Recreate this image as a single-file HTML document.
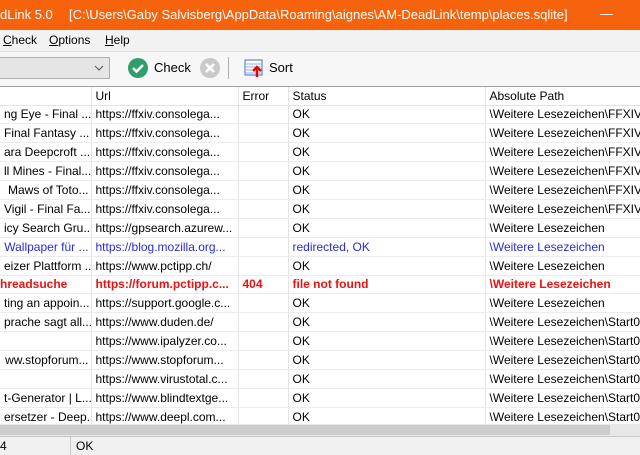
<!DOCTYPE html>
<html><head><meta charset="utf-8"><style>
*{margin:0;padding:0;box-sizing:border-box}
body{width:640px;height:455px;overflow:hidden;background:#f0f0f0;font-family:"Liberation Sans",sans-serif;font-size:12px;color:#000;position:relative}
.title{position:absolute;left:0;top:0;width:640px;height:30px;background:#f7630c;color:#fff;font-size:13px;line-height:30px;white-space:nowrap}
.menu{position:absolute;top:30px;left:0;width:640px;height:22px;background:#f2f2f2;line-height:21px;font-size:12px;border-bottom:1px solid #e0e0e0}
.tool{position:absolute;top:52px;left:0;width:640px;height:34px;background:#f7f7f7}
.grid{position:absolute;top:86px;left:0;width:640px;height:338px;background:#fff;border-top:1px solid #a0a0a0;overflow:hidden}
table{border-collapse:collapse;table-layout:fixed;width:660px}
td{height:18.9px;border-right:1px solid #e3e3e3;border-bottom:1px solid #ececec;white-space:nowrap;overflow:hidden;padding:0 4px;font-size:12px}
tr.h td{height:18px;border-right:1px solid #e3e3e3;border-bottom:1px solid #e3e3e3;font-size:12px}
tr.b td{color:#2a2ad6}
tr.r td{color:#ee1111;font-weight:bold}
.n{text-align:right;padding-right:2px}
.scroll{position:absolute;top:424px;left:0;width:640px;height:12px;background:#e8e8e8}
.status{position:absolute;top:436px;left:0;width:640px;height:19px;background:#f0f0f0;border-top:1px solid #c8c8c8;line-height:18px}
</style></head><body>
<div class="title"><span style="position:absolute;left:0">dLink 5.0</span><span style="position:absolute;left:69px">[C:\Users\Gaby Salvisberg\AppData\Roaming\aignes\AM-DeadLink\temp\places.sqlite]</span><span style="position:absolute;left:600px;top:-1px">—</span></div>
<div class="menu"><span style="position:absolute;left:3px"><u>C</u>heck</span><span style="position:absolute;left:49px"><u>O</u>ptions</span><span style="position:absolute;left:105px"><u>H</u>elp</span></div>
<div class="tool">
<div style="position:absolute;left:-2px;top:5px;width:112px;height:22px;background:#e5e5e5;border:1px solid #adadad"><svg style="position:absolute;left:95px;top:7px" width="10" height="6"><path d="M1 1L5 5L9 1" stroke="#555" fill="none"/></svg></div>
<svg style="position:absolute;left:128px;top:6px" width="20" height="20"><circle cx="10" cy="10" r="10" fill="#2e9e6b"/><path d="M5 10l3.5 3.5L15 7" stroke="#fff" stroke-width="2.6" fill="none"/></svg>
<span style="position:absolute;left:154px;top:8px;font-size:13px">Check</span>
<svg style="position:absolute;left:200px;top:6px" width="20" height="20"><circle cx="10" cy="10" r="10" fill="#c9c9c9"/><path d="M6 6l8 8M14 6l-8 8" stroke="#fff" stroke-width="2.6"/></svg>
<div style="position:absolute;left:228px;top:5px;width:1px;height:22px;background:#b0b0b0"></div>
<svg style="position:absolute;left:244px;top:6px" width="20" height="20"><rect x="1" y="2" width="17" height="15" fill="#fff" stroke="#3a6fc7"/><path d="M2 6h15M2 9h15M2 12h15M2 15h15" stroke="#8db0e0"/><path d="M13 19V9M9 13l4-4 4 4" stroke="#e00" stroke-width="2.4" fill="none"/></svg>
<span style="position:absolute;left:269px;top:8px;font-size:13px">Sort</span>
</div>
<div class="grid"><table>
<colgroup><col style="width:91px"><col style="width:147px"><col style="width:50px"><col style="width:197px"><col style="width:175px"></colgroup>
<tr class="h"><td></td><td>Url</td><td>Error</td><td>Status</td><td>Absolute Path</td></tr>
<tr><td class="n">ng Eye - Final ...</td><td>https://ffxiv.consolega...</td><td></td><td>OK</td><td>\Weitere Lesezeichen\FFXIV\F</td></tr>
<tr><td class="n">Final Fantasy ...</td><td>https://ffxiv.consolega...</td><td></td><td>OK</td><td>\Weitere Lesezeichen\FFXIV\F</td></tr>
<tr><td class="n">ara Deepcroft ...</td><td>https://ffxiv.consolega...</td><td></td><td>OK</td><td>\Weitere Lesezeichen\FFXIV\F</td></tr>
<tr><td class="n">ll Mines - Final...</td><td>https://ffxiv.consolega...</td><td></td><td>OK</td><td>\Weitere Lesezeichen\FFXIV\F</td></tr>
<tr><td class="n">Maws of Toto...</td><td>https://ffxiv.consolega...</td><td></td><td>OK</td><td>\Weitere Lesezeichen\FFXIV\F</td></tr>
<tr><td class="n">Vigil - Final Fa...</td><td>https://ffxiv.consolega...</td><td></td><td>OK</td><td>\Weitere Lesezeichen\FFXIV\F</td></tr>
<tr><td class="n">icy Search Gru...</td><td>https://gpsearch.azurew...</td><td></td><td>OK</td><td>\Weitere Lesezeichen</td></tr>
<tr class="b"><td class="n">Wallpaper für ...</td><td>https://blog.mozilla.org...</td><td></td><td>redirected, OK</td><td>\Weitere Lesezeichen</td></tr>
<tr><td class="n">eizer Plattform ...</td><td>https://www.pctipp.ch/</td><td></td><td>OK</td><td>\Weitere Lesezeichen</td></tr>
<tr class="r"><td style="padding-left:0">hreadsuche</td><td>https://forum.pctipp.c...</td><td>404</td><td>file not found</td><td>\Weitere Lesezeichen</td></tr>
<tr><td class="n">ting an appoin...</td><td>https://support.google.c...</td><td></td><td>OK</td><td>\Weitere Lesezeichen</td></tr>
<tr><td class="n">prache sagt all...</td><td>https://www.duden.de/</td><td></td><td>OK</td><td>\Weitere Lesezeichen\Start02</td></tr>
<tr><td class="n"></td><td>https://www.ipalyzer.co...</td><td></td><td>OK</td><td>\Weitere Lesezeichen\Start02</td></tr>
<tr><td class="n">ww.stopforum...</td><td>https://www.stopforum...</td><td></td><td>OK</td><td>\Weitere Lesezeichen\Start02</td></tr>
<tr><td class="n"></td><td>https://www.virustotal.c...</td><td></td><td>OK</td><td>\Weitere Lesezeichen\Start02</td></tr>
<tr><td class="n">t-Generator | L...</td><td>https://www.blindtextge...</td><td></td><td>OK</td><td>\Weitere Lesezeichen\Start02</td></tr>
<tr><td class="n">ersetzer - Deep...</td><td>https://www.deepl.com...</td><td></td><td>OK</td><td>\Weitere Lesezeichen\Start02</td></tr>
</table></div>
<div class="scroll"><div style="position:absolute;left:0;top:1px;width:610px;height:10px;background:#cdcdcd"></div></div>
<div class="status"><span style="position:absolute;left:0">4</span><div style="position:absolute;left:70px;top:0;width:1px;height:18px;background:#c8c8c8"></div><span style="position:absolute;left:76px">OK</span></div>
</body></html>
